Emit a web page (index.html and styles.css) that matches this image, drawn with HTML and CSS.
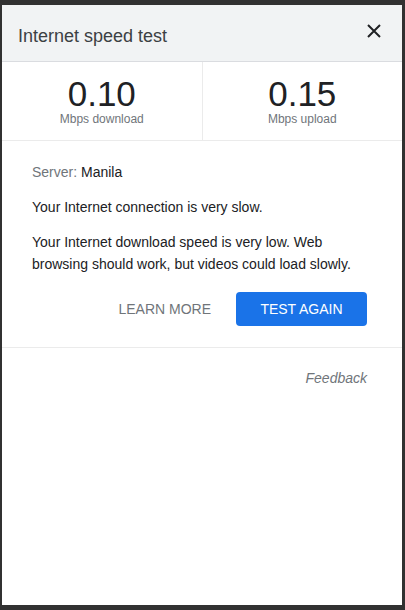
FILE: index.html
```html
<!DOCTYPE html>
<html>
<head>
<meta charset="utf-8">
<link rel="stylesheet" href="styles.css">
</head>
<body>
<div class="panel">
  <div class="header">
    <div class="title">Internet speed test</div>
    <svg class="close" width="14" height="14" viewBox="0 0 14 14"><path d="M1 1L13 13M13 1L1 13" stroke="#202124" stroke-width="2" fill="none"/></svg>
  </div>
  <div class="stats">
    <div class="stat">
      <div class="num">0.10</div>
      <div class="lbl">Mbps download</div>
    </div>
    <div class="stat">
      <div class="num">0.15</div>
      <div class="lbl">Mbps upload</div>
    </div>
  </div>
  <div class="body">
    <p class="server"><span class="muted">Server:</span> Manila</p>
    <p>Your Internet connection is very slow.</p>
    <p class="last">Your Internet download speed is very low. Web browsing should work, but videos could load slowly.</p>
    <div class="actions">
      <span class="learn">LEARN MORE</span>
      <span class="btn">TEST AGAIN</span>
    </div>
  </div>
  <div class="footer">
    <span class="feedback">Feedback</span>
  </div>
</div>
</body>
</html>
```
FILE: styles.css
```css
html, body { margin: 0; padding: 0; }
body {
  background: #313131;
  font-family: "Liberation Sans", Arial, sans-serif;
  width: 405px;
  height: 610px;
  overflow: hidden;
}
.panel {
  margin: 5px 0 0 2px;
  width: 400px;
  height: 600px;
  background: #fff;
}
.header {
  background: #f1f3f4;
  border-bottom: 1px solid #dadce0;
  display: flex;
  align-items: center;
  justify-content: space-between;
  padding: 0 21px 0 16px;
  box-sizing: border-box;
  height: 57px;
}
.title {
  font-size: 18px;
  color: #3c4043;
  padding-top: 6px;
}
.close { margin-top: -5px; }
.stats {
  display: flex;
  height: 78px;
  border-bottom: 1px solid #ebebeb;
}
.stat {
  flex: 1;
  display: flex;
  flex-direction: column;
  align-items: center;
  padding-top: 14px;
}
.stat + .stat { border-left: 1px solid #ebebeb; }
.num {
  font-size: 35px;
  line-height: 36px;
  color: #202124;
}
.lbl {
  font-size: 12px;
  line-height: 14px;
  color: #70757a;
}
.body {
  padding: 20px 35px 21px 30px;
  border-bottom: 1px solid #ebebeb;
  font-size: 14px;
  color: #202124;
  line-height: 22px;
}
.body p { margin: 0 0 13px 0; }
.body p.last { margin-bottom: 0; }
.muted { color: #70757a; }
.actions {
  display: flex;
  justify-content: flex-end;
  align-items: center;
  gap: 25px;
  margin-top: 17px;
}
.learn {
  color: #70757a;
  font-size: 14px;
}
.btn {
  background: #1a73e8;
  color: #fff;
  font-size: 14px;
  width: 131px;
  height: 34px;
  border-radius: 4px;
  display: flex;
  align-items: center;
  justify-content: center;
}
.footer {
  display: flex;
  justify-content: flex-end;
  padding: 22px 35px 0 0;
}
.feedback {
  font-style: italic;
  color: #70757a;
  font-size: 14px;
}
```
